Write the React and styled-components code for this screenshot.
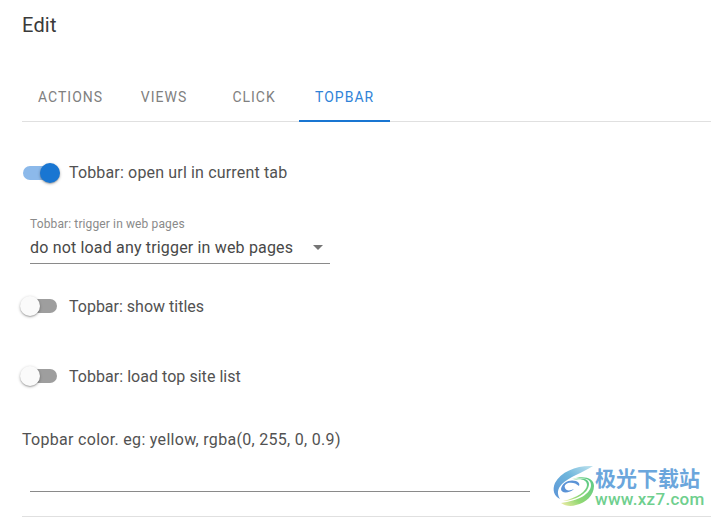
import React from "react";
import styled, { createGlobalStyle } from "styled-components";

const GlobalStyle = createGlobalStyle`
  html, body {
    margin: 0;
    padding: 0;
    background: #fff;
  }
  body {
    font-family: Roboto, "Liberation Sans", sans-serif;
    overflow: hidden;
  }
`;

const tabs = ["Actions", "Views", "Click", "Topbar"];

const Switch = ({ on }) => (
  <SwitchBase>
    <Track on={on ? 1 : 0} />
    <Thumb on={on ? 1 : 0} />
  </SwitchBase>
);

const App = () => {
  return (
    <Page>
      <GlobalStyle />
      <Title>Edit</Title>
      <TabBar>
        {tabs.map((tab) => (
          <Tab key={tab} active={tab === "Topbar" ? 1 : 0}>{tab}</Tab>
        ))}
      </TabBar>

      <SwitchRow first>
        <Switch on />
        <RowLabel spacing="0.16px">Tobbar: open url in current tab</RowLabel>
      </SwitchRow>

      <SelectField>
        <SmallLabel>Tobbar: trigger in web pages</SmallLabel>
        <SelectBox>
          <span>do not load any trigger in web pages</span>
          <svg width="24" height="24" viewBox="0 0 24 24">
            <path d="M7 10l5 5 5-5z" fill="#757575" />
          </svg>
        </SelectBox>
      </SelectField>

      <SwitchRow>
        <Switch />
        <RowLabel>Topbar: show titles</RowLabel>
      </SwitchRow>

      <SwitchRow wide>
        <Switch />
        <RowLabel spacing="0.04px">Tobbar: load top site list</RowLabel>
      </SwitchRow>

      <FieldLabel>Topbar color. eg: yellow, rgba(0, 255, 0, 0.9)</FieldLabel>
      <TextInput />
      <BottomLine />

      <Watermark>
        <svg width="43" height="44" viewBox="0 0 43 44">
          <defs>
            <linearGradient id="logoBlue" x1="1" y1="0" x2="0" y2="1">
              <stop offset="0" stopColor="#bfe3ee" />
              <stop offset="0.45" stopColor="#6fb6dc" />
              <stop offset="1" stopColor="#5b93d6" />
            </linearGradient>
            <linearGradient id="logoGreen" x1="1" y1="0" x2="0" y2="1">
              <stop offset="0" stopColor="#58c98a" />
              <stop offset="0.65" stopColor="#92d873" />
              <stop offset="1" stopColor="#f4eca8" />
            </linearGradient>
          </defs>
          <path d="M41 1C26 0 9 6 3 18c-3 7-1 13 5 16-3-5-3-10 2-15C17 12 30 8 41 1z" fill="url(#logoBlue)" />
          <path d="M9 24c1-7 9-10 15-8 3 1 4 3 3 5-3-3-7-4-11-3-3 1-4 3-3 5 1 3 5 3 9 1-4 4-13 5-13 0z" fill="#5b93d6" />
          <path d="M20 14c9-2 19-1 19 6 0 9-13 16-30 18 4 3 10 4 15 2 10-2 18-10 18-19 0-8-10-11-22-7z" fill="url(#logoGreen)" />
          <path d="M21 15c8-2 14 0 14 5 0 6-10 13-24 16 10 0 26-7 26-17 0-5-7-7-16-4z" fill="url(#logoGreen)" />
        </svg>
        <WatermarkText>
          <WatermarkName>极光下载站</WatermarkName>
          <WatermarkUrl>www.xz7.com</WatermarkUrl>
        </WatermarkText>
      </Watermark>
    </Page>
  );
};

const Page = styled.div`
  position: relative;
  width: 711px;
  height: 517px;
  padding-left: 22px;
  box-sizing: border-box;
  overflow: hidden;
`;

const Title = styled.h2`
  margin: 0;
  padding-top: 13px;
  height: 72px;
  box-sizing: border-box;
  font-size: 20px;
  line-height: 24px;
  font-weight: 400;
  letter-spacing: 0.2px;
  color: #3a3a3a;
`;

const TabBar = styled.div`
  display: flex;
  height: 49px;
  border-bottom: 1px solid #e0e0e0;
`;

const Tab = styled.div`
  min-width: 90px;
  box-sizing: border-box;
  padding: 2px 16px 0;
  display: flex;
  align-items: center;
  justify-content: center;
  margin-bottom: -1px;
  font-size: 14px;
  letter-spacing: 1px;
  text-transform: uppercase;
  color: ${(p) => (p.active ? "#2f83d8" : "#808080")};
  border-bottom: 2px solid ${(p) => (p.active ? "#1976d2" : "transparent")};
`;

const SwitchRow = styled.div`
  display: flex;
  align-items: center;
  height: 24px;
  margin-top: ${(p) => (p.first ? "39px" : p.wide ? "46px" : "30px")};
`;

const RowLabel = styled.span`
  font-size: 16px;
  letter-spacing: ${(p) => p.spacing || "0"};
  color: #525252;
  margin-left: 9px;
  margin-bottom: ${(p) => (p.spacing === "0.16px" ? "1px" : "0")};
`;

const SwitchBase = styled.div`
  position: relative;
  width: 38px;
  height: 20px;
  flex: none;
`;

const Track = styled.div`
  position: absolute;
  left: 1px;
  top: 3px;
  width: 34px;
  height: 14px;
  border-radius: 7px;
  background: ${(p) => (p.on ? "#8cb9ea" : "#9e9e9e")};
`;

const Thumb = styled.div`
  position: absolute;
  left: ${(p) => (p.on ? "18px" : "-2px")};
  top: 0;
  width: 20px;
  height: 20px;
  border-radius: 50%;
  background: ${(p) => (p.on ? "#1976d2" : "#fafafa")};
  box-shadow: 0 1px 3px rgba(0, 0, 0, 0.3), 0 1px 1px rgba(0, 0, 0, 0.14);
`;

const SelectField = styled.div`
  width: 300px;
  margin: 32px 0 0 8px;
`;

const SmallLabel = styled.div`
  font-size: 12px;
  line-height: 14px;
  letter-spacing: 0.12px;
  color: #8a8a8a;
`;

const SelectBox = styled.div`
  display: flex;
  align-items: center;
  justify-content: space-between;
  height: 32px;
  font-size: 16px;
  letter-spacing: 0.17px;
  color: #484848;
  border-bottom: 1px solid #8a8a8a;
`;

const FieldLabel = styled.div`
  margin-top: 42px;
  font-size: 16px;
  line-height: 19px;
  letter-spacing: 0.3px;
  color: #525252;
`;

const TextInput = styled.div`
  width: 500px;
  height: 42px;
  margin-left: 8px;
  border-bottom: 1px solid #8a8a8a;
`;

const BottomLine = styled.div`
  margin-top: 24px;
  height: 1px;
  background: #e0e0e0;
`;

const Watermark = styled.div`
  position: absolute;
  left: 552px;
  top: 465px;
  display: flex;
  align-items: center;
`;

const WatermarkText = styled.div`
  display: flex;
  flex-direction: column;
`;

const WatermarkName = styled.div`
  font-family: "Noto Sans CJK SC", sans-serif;
  font-size: 21px;
  line-height: 25px;
  font-weight: 700;
  color: #6ba6dc;
`;

const WatermarkUrl = styled.div`
  font-size: 17px;
  line-height: 19px;
  font-weight: 500;
  letter-spacing: 0.3px;
  color: #6fcf8e;
`;

export default App;
